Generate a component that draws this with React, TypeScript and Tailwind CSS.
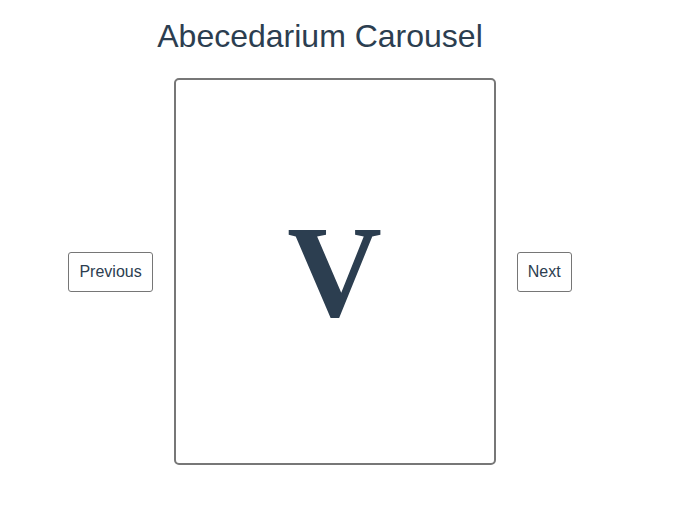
import React, { useState } from 'react';

const LETTERS = 'ABCDEFGHIJKLMNOPQRSTUVWXYZ'.split('');

const App: React.FC = () => {
  const [index, setIndex] = useState(21);

  const handlePrev = () => {
    setIndex((index + LETTERS.length - 1) % LETTERS.length);
  };

  const handleNext = () => {
    setIndex((index + 1) % LETTERS.length);
  };

  return (
    <div className="w-[640px] bg-white text-[#2c3e50] font-['Liberation_Sans',Arial,sans-serif]">
      <h1 className="pt-[18px] text-center text-[32px] leading-[37px]">Abecedarium Carousel</h1>

      <div className="mt-[23px] flex items-center justify-center gap-[21px]">
        <button
          onClick={handlePrev}
          className="h-10 px-[10px] border border-[#767676] rounded-[3px] bg-white text-base text-[#2c3e50]"
        >
          Previous
        </button>

        {/* Letter card */}
        <div className="w-[322px] h-[387px] border-2 border-[#777] rounded-[5px] flex items-center justify-center">
          <span className="font-['Liberation_Serif','Times_New_Roman',serif] font-bold text-[131px] leading-none">
            {LETTERS[index]}
          </span>
        </div>

        <button
          onClick={handleNext}
          className="h-10 px-[10px] border border-[#767676] rounded-[3px] bg-white text-base text-[#2c3e50]"
        >
          Next
        </button>
      </div>
    </div>
  );
};

export default App;
